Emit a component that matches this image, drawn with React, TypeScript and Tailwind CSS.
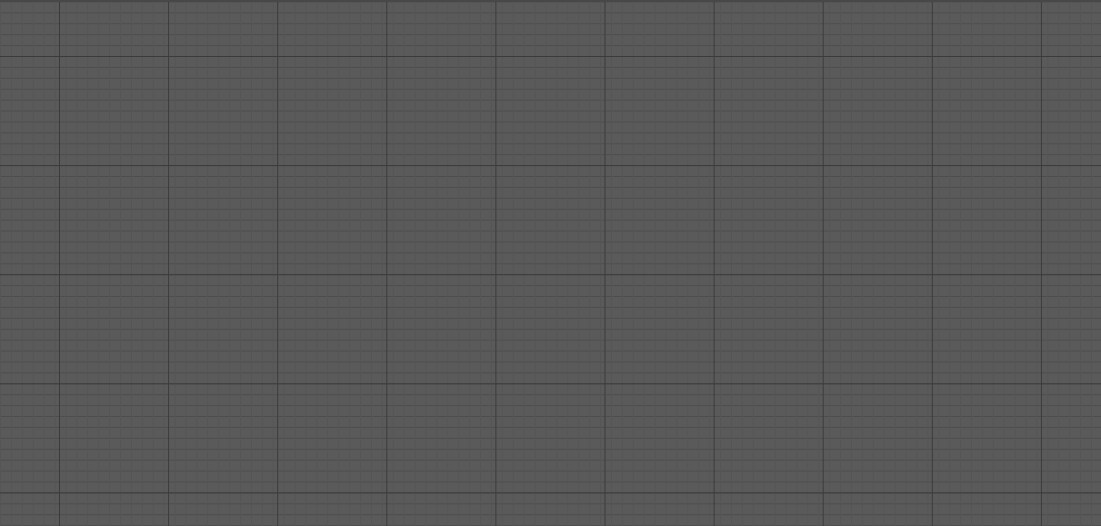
export default function App() {
  const cell = 109.1;
  const minor = cell / 10;
  return (
    <div className="w-[1101px] h-[526px] overflow-hidden bg-[#5a5a5a] border-t-2 border-[#484848]">
      <svg width="1101" height="524" className="block">
        <defs>
          <pattern id="minor-h" width={minor} height={minor} patternUnits="userSpaceOnUse" x="0" y={56 - 2}>
            <line x1="0" y1="0.5" x2={minor} y2="0.5" stroke="#4d4d4d" strokeWidth="1" />
            <line x1="0.5" y1="0" x2="0.5" y2={minor} stroke="#555555" strokeWidth="1" />
          </pattern>
          <pattern id="major" width={cell} height={cell} patternUnits="userSpaceOnUse" x={59} y={56 - 2}>
            <line x1="0" y1="0.5" x2={cell} y2="0.5" stroke="#3b3b3b" strokeWidth="1" />
            <line x1="0.5" y1="0" x2="0.5" y2={cell} stroke="#3b3b3b" strokeWidth="1" />
          </pattern>
        </defs>
        <rect width="1101" height="524" fill="url(#minor-h)" />
        <rect width="1101" height="524" fill="url(#major)" />
      </svg>
    </div>
  );
}
